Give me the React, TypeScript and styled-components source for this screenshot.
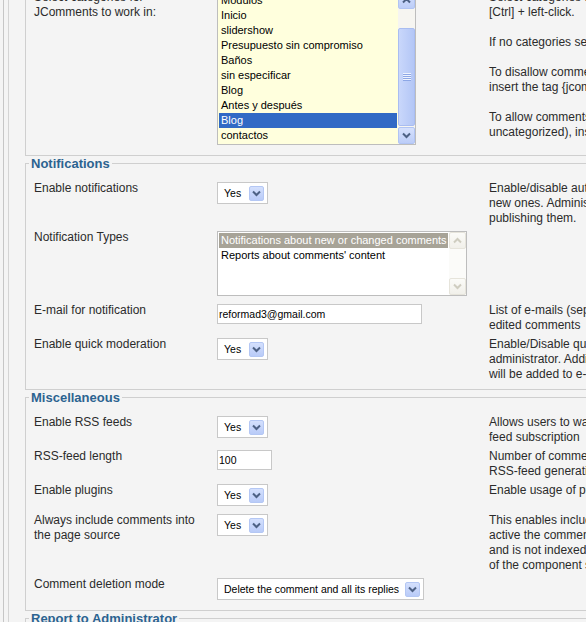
import React from "react";
import styled, { createGlobalStyle } from "styled-components";

const GlobalStyle = createGlobalStyle`
  html, body { margin: 0; padding: 0; background: #ffffff; }
  body { font-family: "Liberation Sans", Arial, sans-serif; }
  * { box-sizing: border-box; }
`;

const Viewport = styled.div`
  width: 586px;
  height: 622px;
  overflow: hidden;
  background: #f4f4f4;
  padding-left: 3px;
`;

const OuterRail = styled.div`
  height: 100%;
  border-left: 1px solid #c6c6c6;
  padding-left: 4px;
`;

const InnerRail = styled.div`
  height: 100%;
  border-left: 1px solid #d4d4d4;
  padding-left: 16px;
  display: flex;
  flex-direction: column;
`;

const Sheet = styled.div`
  margin-top: -35px;
  width: 760px;
  flex-shrink: 0;
`;

const Fieldset = styled.fieldset`
  margin: 0;
  padding: 7px 0 6px 8px;
  border: 1px solid #cfcfcf;
  min-width: 0;
`;

const Legend = styled.legend`
  margin-left: -5px;
  padding: 1px 2px 0;
  font-size: 13px;
  font-weight: bold;
  line-height: 14px;
  color: #2c6390;
`;

const Row = styled.div`
  display: grid;
  grid-template-columns: 183px 272px 1fr;
  align-items: start;
  padding: 2px 0;
`;

const Label = styled.div`
  font-size: 12px;
  line-height: 15px;
  color: #2b2b2b;
  padding: 1px 6px 0 0;
  margin-bottom: -1px;
`;

const ControlCell = styled.div`
  display: flex;
  padding: 2px 0;
`;

const Desc = styled.div`
  font-size: 12px;
  line-height: 15px;
  color: #2b2b2b;
  white-space: nowrap;
  padding-top: 1px;
  margin-bottom: -1px;
`;

const DescPara = styled.p`
  margin: 0 0 15px;
  &:last-child {
    margin-bottom: 0;
  }
`;

const DescLine = styled.span`
  display: block;
`;

const ListBox = styled.div<{ $w: number; $h: number; $bg: string }>`
  width: ${(p) => p.$w}px;
  height: ${(p) => p.$h}px;
  border: 1px solid #bdbdbd;
  background: ${(p) => p.$bg};
  display: flex;
`;

const ListItems = styled.div`
  flex: 1;
  min-width: 0;
  padding: 1px;
`;

const ListItem = styled.div<{ $selected?: boolean; $tone?: "blue" | "gray" }>`
  height: 15px;
  line-height: 15px;
  font-size: 11px;
  padding-left: 2px;
  white-space: nowrap;
  overflow: hidden;
  color: ${(p) => (p.$selected ? "#ffffff" : "#000000")};
  background: ${(p) =>
    p.$selected ? (p.$tone === "gray" ? "#a7a397" : "#316ac5") : "transparent"};
`;

const Scrollbar = styled.div<{ $disabled?: boolean }>`
  width: 17px;
  flex-shrink: 0;
  display: flex;
  flex-direction: column;
  background: ${(p) => (p.$disabled ? "#fbfbf9" : "#f6f5f1")};
`;

const ScrollButton = styled.div<{ $disabled?: boolean }>`
  height: 17px;
  flex-shrink: 0;
  border-radius: 2px;
  border: 1px solid ${(p) => (p.$disabled ? "#e6e4db" : "#b1c4f3")};
  background: ${(p) =>
    p.$disabled
      ? "linear-gradient(#fbfbf8, #f1f0ea)"
      : "linear-gradient(#d6e1fd, #bccdf8)"};
  display: flex;
  align-items: center;
  justify-content: center;
`;

const ScrollTrack = styled.div<{ $size?: number }>`
  ${(p) => (p.$size !== undefined ? `height: ${p.$size}px; flex-shrink: 0;` : "flex: 1;")}
`;

const ScrollThumb = styled.div<{ $size: number }>`
  height: ${(p) => p.$size}px;
  flex-shrink: 0;
  border-radius: 2px;
  border: 1px solid #a9bdf1;
  background: linear-gradient(90deg, #c9d7fb, #bccdf8 60%, #b3c6f6);
  display: flex;
  align-items: center;
  justify-content: center;
`;

const SelectBox = styled.div<{ $w: number }>`
  width: ${(p) => p.$w}px;
  height: 22px;
  border: 1px solid #c8c8c8;
  background: #ffffff;
  display: flex;
  align-items: center;
  justify-content: space-between;
  padding: 0 3px 0 6px;
  font-size: 10.5px;
  color: #000000;
  white-space: nowrap;
`;

const SelectArrow = styled.span`
  width: 15px;
  height: 15px;
  border-radius: 2px;
  border: 1px solid #b4c7f4;
  background: linear-gradient(#d4e0fd, #b9cbf8);
  display: flex;
  align-items: center;
  justify-content: center;
`;

const TextInput = styled.input<{ $w: number }>`
  width: ${(p) => p.$w}px;
  height: 20px;
  border: 1px solid #c8c8c8;
  background: #ffffff;
  padding: 0 1px;
  margin: 0;
  font-family: "Liberation Sans", Arial, sans-serif;
  font-size: 10.5px;
  color: #000000;
  outline: none;
`;

const Chevron = ({ up, color }: { up?: boolean; color: string }) => (
  <svg width="9" height="7" viewBox="0 0 9 7">
    <path
      d={up ? "M1 5.5 L4.5 2 L8 5.5" : "M1 1.5 L4.5 5 L8 1.5"}
      fill="none"
      stroke={color}
      strokeWidth="2"
    />
  </svg>
);

const Grip = () => (
  <svg width="8" height="8" viewBox="0 0 8 8">
    {[0, 2, 4, 6].map((y) => (
      <g key={y}>
        <rect x="0" y={y} width="8" height="1" fill="#eef3fe" />
        <rect x="0" y={y + 1} width="8" height="1" fill="#8da7e6" />
      </g>
    ))}
  </svg>
);

const Select = ({ value, width }: { value: string; width: number }) => (
  <SelectBox $w={width}>
    <span>{value}</span>
    <SelectArrow>
      <Chevron color="#4d6185" />
    </SelectArrow>
  </SelectBox>
);

const categories = [
  "Modulos",
  "Inicio",
  "slidershow",
  "Presupuesto sin compromiso",
  "Baños",
  "sin especificar",
  "Blog",
  "Antes y después",
  "Blog",
  "contactos",
];

type Setting = {
  label: React.ReactNode;
  control: React.ReactNode;
  desc?: string[];
};

const notificationRows: Setting[] = [
  {
    label: "Enable notifications",
    control: <Select value="Yes" width={51} />,
    desc: [
      "Enable/disable automatic notifications about",
      "new ones. Administrators will be notified before",
      "publishing them.",
    ],
  },
  {
    label: "Notification Types",
    control: (
      <ListBox $w={250} $h={65} $bg="#ffffff">
        <ListItems>
          <ListItem $selected $tone="gray">
            Notifications about new or changed comments
          </ListItem>
          <ListItem>Reports about comments' content</ListItem>
        </ListItems>
        <Scrollbar $disabled>
          <ScrollButton $disabled>
            <Chevron up color="#cfcdc0" />
          </ScrollButton>
          <ScrollTrack />
          <ScrollButton $disabled>
            <Chevron color="#cfcdc0" />
          </ScrollButton>
        </Scrollbar>
      </ListBox>
    ),
  },
  {
    label: "E-mail for notification",
    control: <TextInput $w={205} readOnly defaultValue="reformad3@gmail.com" />,
    desc: [
      "List of e-mails (separated by comma) to send notifications about new and",
      "edited comments",
    ],
  },
  {
    label: "Enable quick moderation",
    control: <Select value="Yes" width={51} />,
    desc: [
      "Enable/Disable quick moderation of comments by",
      "administrator. Additional links (publish, delete)",
      "will be added to e-mail notification",
    ],
  },
];

const miscRows: Setting[] = [
  {
    label: "Enable RSS feeds",
    control: <Select value="Yes" width={51} />,
    desc: ["Allows users to watch new comments via RSS", "feed subscription"],
  },
  {
    label: "RSS-feed length",
    control: <TextInput $w={55} readOnly defaultValue="100" />,
    desc: ["Number of comments that will be included in", "RSS-feed generation"],
  },
  {
    label: "Enable plugins",
    control: <Select value="Yes" width={51} />,
    desc: ["Enable usage of plugins"],
  },
  {
    label: "Always include comments into the page source",
    control: <Select value="Yes" width={51} />,
    desc: [
      "This enables including comments into the page source when",
      "active the comments are loaded with AJAX,",
      "and is not indexed by search engines, regardless",
      "of the component settings",
    ],
  },
  {
    label: "Comment deletion mode",
    control: <Select value="Delete the comment and all its replies" width={207} />,
  },
];

const SettingRows = ({ rows }: { rows: Setting[] }) => (
  <>
    {rows.map((r, i) => (
      <Row key={i}>
        <Label>{r.label}</Label>
        <ControlCell>{r.control}</ControlCell>
        <Desc>
          {r.desc && (
            <DescPara>
              {r.desc.map((l, j) => (
                <DescLine key={j}>{l}</DescLine>
              ))}
            </DescPara>
          )}
        </Desc>
      </Row>
    ))}
  </>
);

export default function App() {
  return (
    <>
      <GlobalStyle />
      <Viewport>
        <OuterRail>
          <InnerRail>
            <Sheet>
              <Fieldset>
                <Legend>Categories</Legend>
                <Row>
                  <Label>
                    Select categories for
                    <br />
                    JComments to work in:
                  </Label>
                  <ControlCell>
                    <ListBox $w={199} $h={154} $bg="#ffffdd">
                      <ListItems>
                        {categories.map((c, i) => (
                          <ListItem key={i} $selected={i === 8}>
                            {c}
                          </ListItem>
                        ))}
                      </ListItems>
                      <Scrollbar>
                        <ScrollButton>
                          <Chevron up color="#4d6185" />
                        </ScrollButton>
                        <ScrollTrack $size={19} />
                        <ScrollThumb $size={98}>
                          <Grip />
                        </ScrollThumb>
                        <ScrollTrack />
                        <ScrollButton>
                          <Chevron color="#4d6185" />
                        </ScrollButton>
                      </Scrollbar>
                    </ListBox>
                  </ControlCell>
                  <Desc>
                    <DescPara>
                      <DescLine>Select categories for JComments. For multiple selection use</DescLine>
                      <DescLine>[Ctrl] + left-click.</DescLine>
                    </DescPara>
                    <DescPara>
                      <DescLine>If no categories selected, JComments will work in all.</DescLine>
                    </DescPara>
                    <DescPara>
                      <DescLine>To disallow comments in specific content item</DescLine>
                      <DescLine>insert the tag {"{jcomments off}"} into its text.</DescLine>
                    </DescPara>
                    <DescPara>
                      <DescLine>To allow comments in specific content item (even</DescLine>
                      <DescLine>uncategorized), insert the tag {"{jcomments on}"}.</DescLine>
                    </DescPara>
                  </Desc>
                </Row>
              </Fieldset>
              <Fieldset>
                <Legend>Notifications</Legend>
                <SettingRows rows={notificationRows} />
              </Fieldset>
              <Fieldset>
                <Legend>Miscellaneous</Legend>
                <SettingRows rows={miscRows} />
              </Fieldset>
              <Fieldset>
                <Legend>Report to Administrator</Legend>
                <SettingRows
                  rows={[
                    {
                      label: "Enable reports",
                      control: <Select value="Yes" width={51} />,
                      desc: ["Allows users to report comments to administrator"],
                    },
                  ]}
                />
              </Fieldset>
            </Sheet>
          </InnerRail>
        </OuterRail>
      </Viewport>
    </>
  );
}
